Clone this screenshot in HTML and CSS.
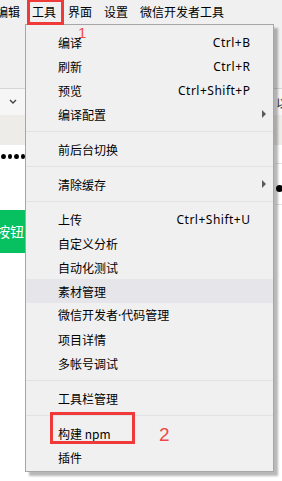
FILE: index.html
```html
<!DOCTYPE html>
<html>
  <head>
    <title>工具菜单</title>
    <link rel="stylesheet" href="styles.css">
  </head>
  <body>
    <div class="app">
      <div class="menubar">
        <span class="mb-item">编辑</span>
        <span class="mb-item">工具</span>
        <span class="mb-item">界面</span>
        <span class="mb-item">设置</span>
        <span class="mb-item">微信开发者工具</span>
      </div>
      <div class="toolbar"></div>
      <div class="tabbar">
        <svg class="chev" width="8" height="6" viewBox="0 0 8 6"><polyline points="1,1 4,4 7,1" fill="none" stroke="#444" stroke-width="1.4"/></svg>
        <span class="tab-cut">以</span>
      </div>
      <div class="strip"></div>
      <div class="stage">
        <div class="stage-left">
          <div class="dots"><i></i><i></i><i></i><i></i><i></i></div>
          <div class="btn">按钮</div>
        </div>
        <div class="stage-right">
          <div class="cell"><i class="dot-big"></i></div>
        </div>
      </div>
    </div>

    <div class="menu">
      <div class="item"><span>编译</span><span class="key">Ctrl+B</span></div>
      <div class="item"><span>刷新</span><span class="key">Ctrl+R</span></div>
      <div class="item"><span>预览</span><span class="key">Ctrl+Shift+P</span></div>
      <div class="item"><span>编译配置</span><span class="arrow"></span></div>
      <div class="sep"></div>
      <div class="item"><span>前后台切换</span></div>
      <div class="sep"></div>
      <div class="item"><span>清除缓存</span><span class="arrow"></span></div>
      <div class="sep"></div>
      <div class="item"><span>上传</span><span class="key">Ctrl+Shift+U</span></div>
      <div class="item"><span>自定义分析</span></div>
      <div class="item"><span>自动化测试</span></div>
      <div class="item hover"><span>素材管理</span></div>
      <div class="item"><span>微信开发者<span class="mid">·</span>代码管理</span></div>
      <div class="item"><span>项目详情</span></div>
      <div class="item"><span>多帐号调试</span></div>
      <div class="sep"></div>
      <div class="item"><span>工具栏管理</span></div>
      <div class="sep"></div>
      <div class="item"><span>构建 npm</span></div>
      <div class="item"><span>插件</span></div>
    </div>

    <div class="mark mark-tools"></div>
    <span class="num num-1">1</span>
    <div class="mark mark-npm"></div>
    <span class="num num-2">2</span>
  </body>
</html>
```

FILE: styles.css
```css
body {
  margin: 0;
  overflow: hidden;
  font-family: "Noto Sans CJK SC", "Noto Sans", sans-serif;
  font-size: 12px;
  color: #000;
  background-color: #FFF;
}
.app {
  width: 282px;
  height: 481px;
  overflow: hidden;
}
.menubar {
  height: 25px;
  line-height: 24px;
  background-color: #F0F0F0;
  margin-left: -10px;
  white-space: nowrap;
  display: flex;
}
.mb-item {
  padding: 0 6px;
}
.toolbar {
  height: 63px;
  background-color: #F0F0F0;
  border-bottom: 1px solid #D6D6D6;
}
.tabbar {
  height: 26px;
  background-color: #F6F6F6;
  display: flex;
  align-items: center;
  justify-content: space-between;
  padding-left: 9px;
}
.chev {
  display: block;
}
.tab-cut {
  margin-right: -6px;
  color: #333;
}
.strip {
  height: 30px;
  background-color: #EDECE9;
}
.stage {
  display: flex;
  justify-content: space-between;
}
.stage-left {
  width: 25px;
}
.dots {
  display: flex;
  gap: 2px;
  margin-left: -5px;
  margin-top: 9px;
}
.dots i {
  display: block;
  width: 5px;
  height: 5px;
  border-radius: 50%;
  background-color: #000;
}
.btn {
  margin-top: 51px;
  margin-left: -38px;
  width: 96px;
  height: 43px;
  line-height: 43px;
  background-color: #07C160;
  color: #FFF;
  font-size: 14px;
  text-align: center;
}
.stage-right {
  width: 6px;
}
.cell {
  margin-top: 18px;
  height: 40px;
  border-top: 1px solid #E3E3E3;
  border-bottom: 1px solid #E3E3E3;
}
.dot-big {
  display: block;
  width: 7px;
  height: 7px;
  border-radius: 50%;
  background-color: #000;
  margin-top: 21px;
}
.menu {
  position: absolute;
  left: 25px;
  top: 24px;
  width: 249px;
  box-sizing: border-box;
  background-color: #F0F0F0;
  border: 1px solid #A6A6A6;
  box-shadow: 4px 4px 2px rgba(0, 0, 0, 0.28);
  padding: 5px 0 2px 0;
}
.item {
  height: 24px;
  display: flex;
  align-items: center;
  justify-content: space-between;
  padding: 0 23px 0 32px;
  white-space: nowrap;
}
.item.hover {
  background-color: #E6E6EA;
}
.key {
  font-family: "Noto Sans", sans-serif;
  font-size: 12px;
  letter-spacing: 0.5px;
  margin-right: -0.5px;
}
.mid {
  font-family: "Noto Sans", sans-serif;
}
.arrow {
  width: 0;
  height: 0;
  border-left: 4px solid #5A5A5A;
  border-top: 4px solid transparent;
  border-bottom: 4px solid transparent;
  margin-right: -16px;
}
.sep {
  height: 1px;
  margin: 5px 0;
  background-color: #E2E2E6;
}
.mark {
  position: absolute;
  border: 3px solid #F03A3A;
  box-sizing: border-box;
}
.mark-tools {
  left: 27px;
  top: -1px;
  width: 37px;
  height: 26px;
}
.mark-npm {
  left: 50px;
  top: 412px;
  width: 85px;
  height: 32px;
}
.num {
  position: absolute;
  color: #F04848;
  font-family: "Liberation Sans", sans-serif;
  line-height: 1;
}
.num-1 {
  left: 78px;
  top: 25px;
  font-size: 15px;
}
.num-2 {
  left: 159px;
  top: 425px;
  font-size: 19px;
}
```
